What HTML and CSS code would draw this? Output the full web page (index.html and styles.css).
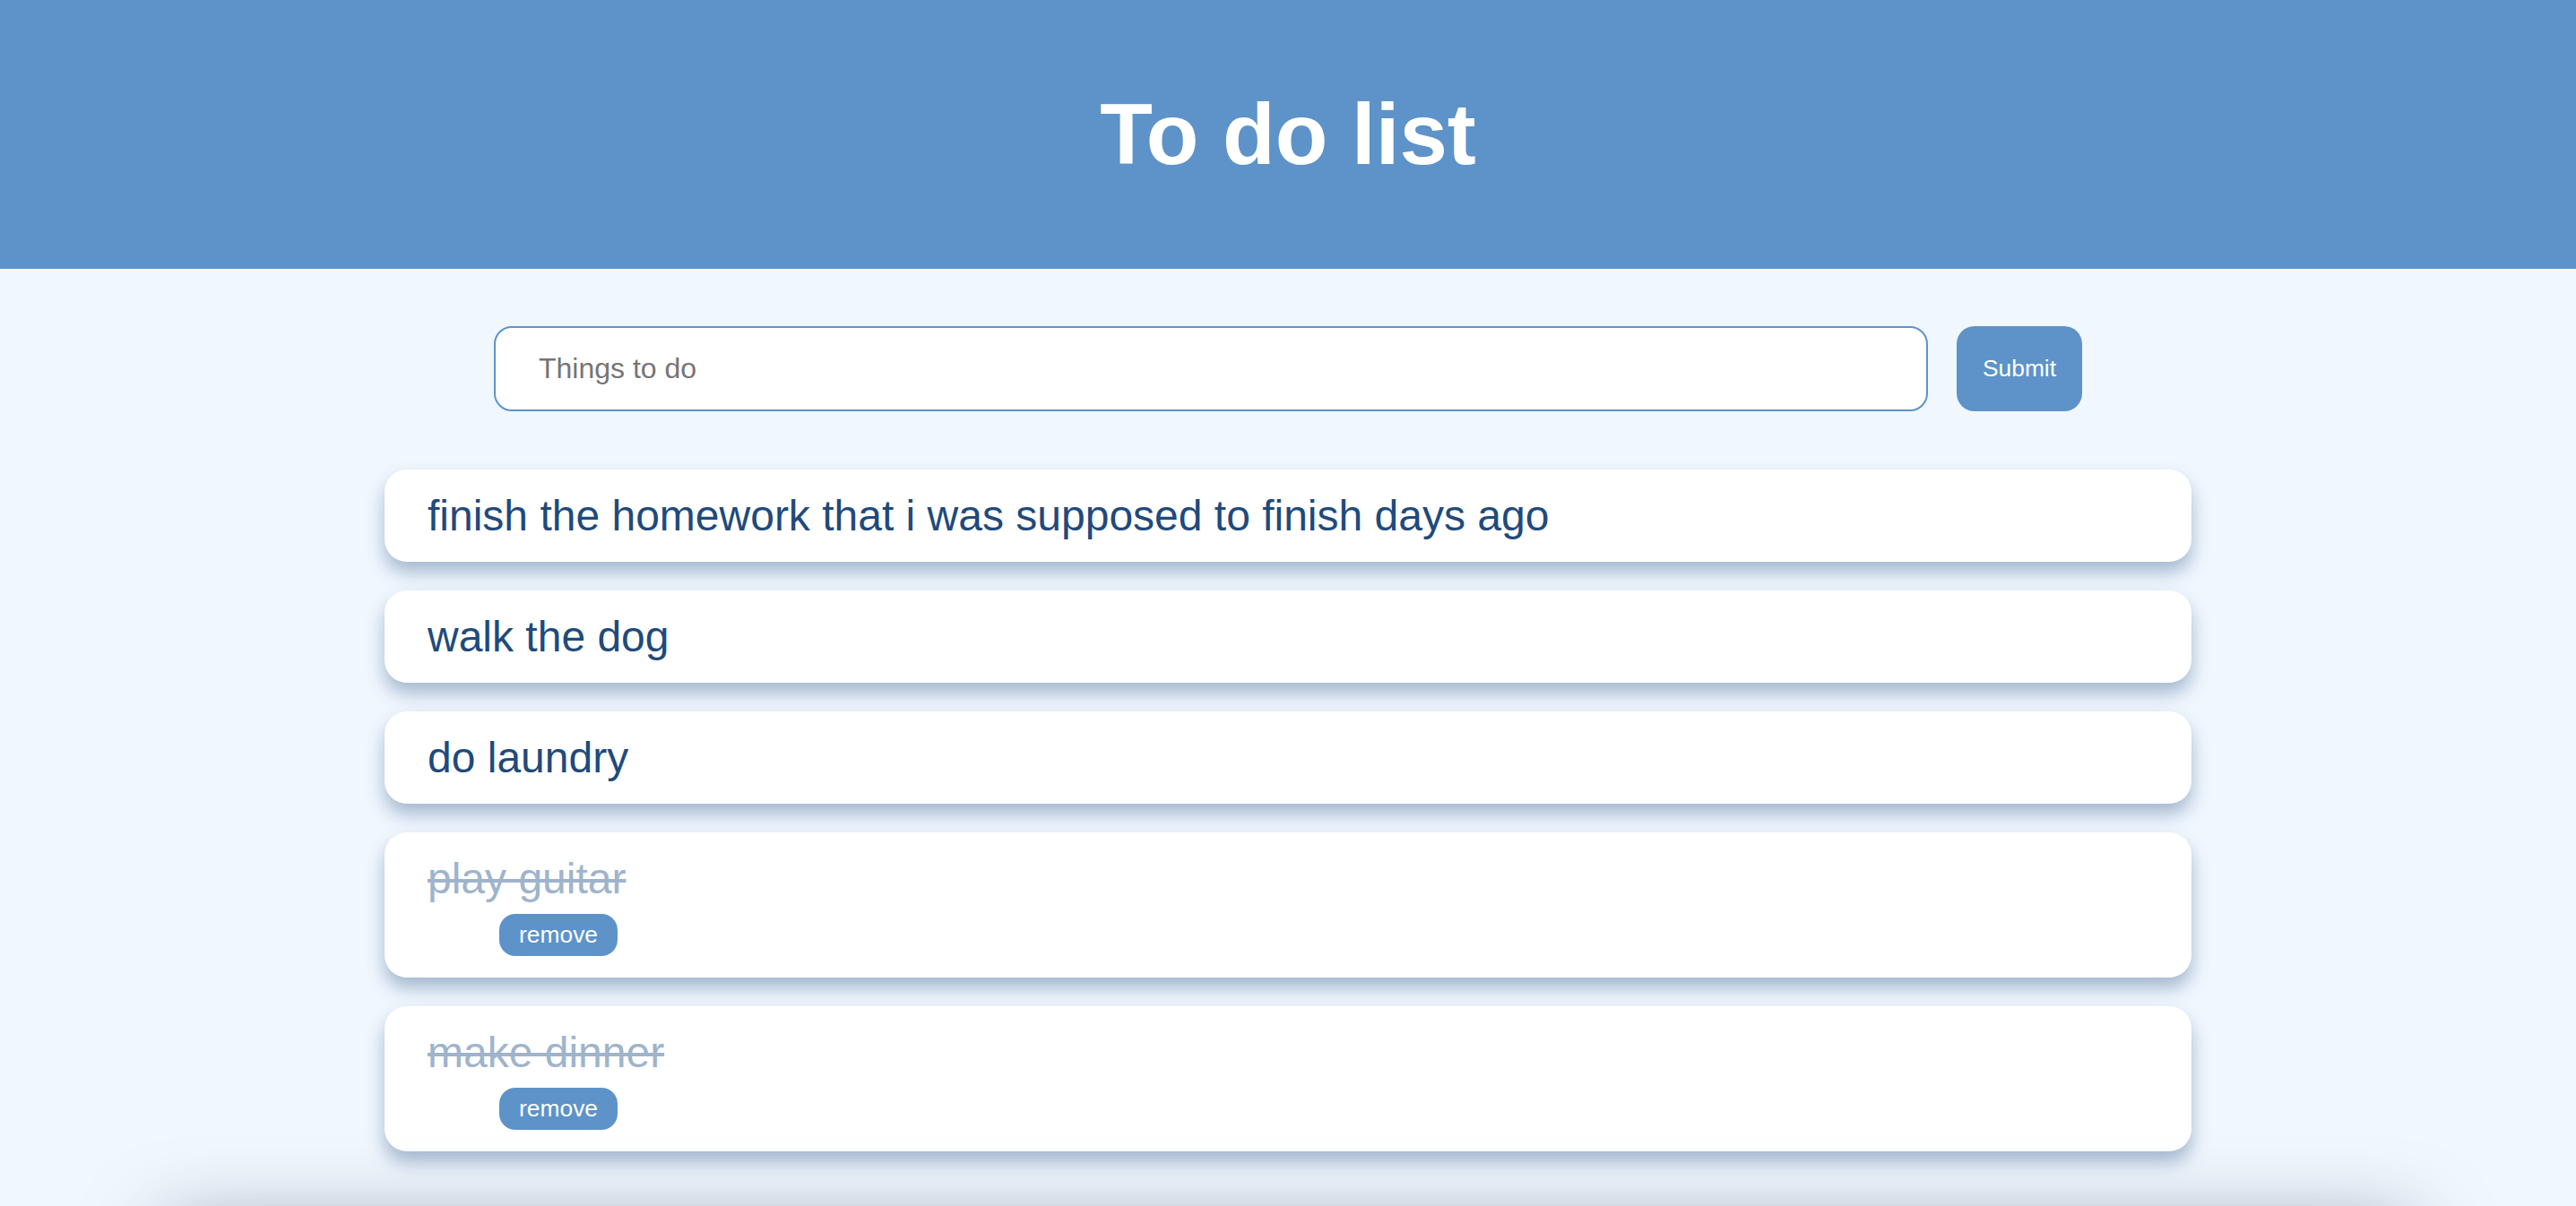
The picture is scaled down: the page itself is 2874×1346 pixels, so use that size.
FILE: index.html
```html
<!DOCTYPE html>
<html lang="en">
<head>
<meta charset="utf-8">
<title>To do list</title>
<link rel="stylesheet" href="styles.css">
</head>
<body>
<header class="top">
  <h1 class="title">To do list</h1>
</header>
<main class="content">
  <form class="add-form">
    <input class="add-input" type="text" placeholder="Things to do">
    <button class="add-btn" type="button">Submit</button>
  </form>
  <ul class="todo-list">
    <li class="todo"><span class="todo-text">finish the homework that i was supposed to finish days ago</span></li>
    <li class="todo"><span class="todo-text">walk the dog</span></li>
    <li class="todo"><span class="todo-text">do laundry</span></li>
    <li class="todo done"><span class="todo-text">play guitar</span><button class="remove-btn" type="button">remove</button></li>
    <li class="todo done"><span class="todo-text">make dinner</span><button class="remove-btn" type="button">remove</button></li>
  </ul>
  <div class="bottom-panel"></div>
</main>
</body>
</html>
```
FILE: styles.css
```css
* { box-sizing: border-box; }

body {
  margin: 0;
  font-family: "Liberation Sans", Arial, sans-serif;
  background: #f0f7fe;
}

.top {
  height: 300px;
  background: #5d93c9;
  display: flex;
  align-items: center;
  justify-content: center;
}

.title {
  margin: 0;
  color: #ffffff;
  font-size: 96px;
  font-weight: 700;
}

.content {
  padding-top: 64px;
}

.add-form {
  display: flex;
  justify-content: center;
  gap: 32px;
}

.add-input {
  width: 1600px;
  height: 95px;
  border: 2px solid #5d93c9;
  border-radius: 20px;
  padding: 0 48px;
  font-family: "Liberation Sans", Arial, sans-serif;
  font-size: 32px;
  background: #ffffff;
  color: #333;
  outline: none;
}

.add-input::placeholder {
  color: #757575;
}

.add-btn {
  width: 140px;
  height: 95px;
  border: none;
  border-radius: 20px;
  background: #5d93c9;
  color: #ffffff;
  font-family: "Liberation Sans", Arial, sans-serif;
  font-size: 26.4px;
  padding: 0;
}

.todo-list {
  list-style: none;
  width: 2016px;
  margin: 65px auto 0;
  padding: 0;
}

.todo {
  background: #ffffff;
  border-radius: 25px;
  padding: 24px 48px;
  margin-bottom: 32px;
  font-size: 48px;
  color: #1f4a7c;
  box-shadow: 0 12px 20px rgba(30, 70, 120, 0.35);
}

.todo-text {
  display: block;
}

.done .todo-text {
  color: #9fb4cc;
  text-decoration: line-through;
  text-decoration-thickness: 4px;
}

.remove-btn {
  display: block;
  margin: 12px 0 0 80px;
  width: 132px;
  height: 47px;
  border: none;
  border-radius: 18px;
  background: #5d93c9;
  color: #ffffff;
  font-family: "Liberation Sans", Arial, sans-serif;
  font-size: 26.4px;
  padding: 0;
}

.bottom-panel {
  width: 2500px;
  height: 120px;
  margin: 90px auto 0;
  background: #f0f7fe;
  box-shadow: 0 0 90px rgba(40, 50, 70, 0.55);
}
```
